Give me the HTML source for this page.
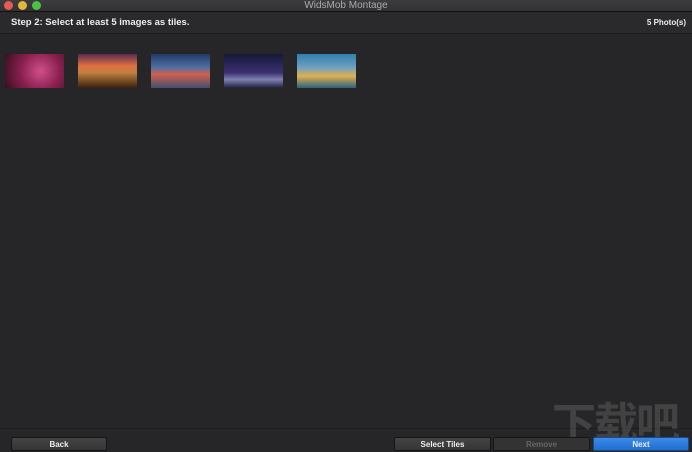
<!DOCTYPE html>
<html><head><meta charset="utf-8"><style>
*{margin:0;padding:0;box-sizing:border-box}
body{width:692px;height:450px;background:#262527;font-family:"Liberation Sans","Noto Sans CJK SC",sans-serif;position:relative;overflow:hidden}
.tb{position:absolute;left:0;top:0;width:692px;height:12px;background:linear-gradient(#3d3c3e,#323133);border-bottom:1px solid #111;text-align:center;color:#aaa;font-size:10px;line-height:11px}
.dot{position:absolute;top:1px;width:9px;height:9px;border-radius:50%}
.hdr{position:absolute;top:12px;left:0;width:692px;height:22px;background:#2a292b;border-bottom:1px solid #1c1c1d;color:#eee;font-weight:bold}
.t{position:absolute;background:#555}
.btn{position:absolute;top:437px;height:14px;background:linear-gradient(#444,#353535);border:1px solid #151515;border-radius:2px;color:#eee;font-size:8px;font-weight:bold;text-align:center;line-height:13px}
</style></head><body>
<div class="tb">WidsMob Montage
<div class="dot" style="left:4px;background:#e85a55"></div>
<div class="dot" style="left:18px;background:#e5b53c"></div>
<div class="dot" style="left:32px;background:#4fbf4a"></div>
</div>
<div class="hdr"><span style="position:absolute;left:11px;top:5px;font-size:9.5px">Step 2: Select at least 5 images as tiles.</span><span style="position:absolute;right:6px;top:6px;font-size:8px">5 Photo(s)</span></div>
<div class="t" style="left:5px;top:54px;width:59px;height:34px;background:radial-gradient(circle at 60% 50%,#d0508a,#8a2050 50%,#3a1020)"></div>
<div class="t" style="left:78px;top:54px;width:59px;height:34px;background:linear-gradient(#5a2a50,#e07040 35%,#c08040 55%,#3a2010)"></div>
<div class="t" style="left:151px;top:54px;width:59px;height:34px;background:linear-gradient(#203a6a,#5070a0 40%,#d06050 60%,#405070)"></div>
<div class="t" style="left:224px;top:54px;width:59px;height:34px;background:linear-gradient(#15183a,#3a3070 55%,#8080b0 75%,#202040)"></div>
<div class="t" style="left:297px;top:54px;width:59px;height:34px;background:linear-gradient(#3080b0,#70a0c0 40%,#e0b050 65%,#2a6080)"></div>
<div style="position:absolute;left:0;top:428px;width:692px;border-top:1px solid #1c1c1d"></div>
<div style="position:absolute;left:552px;top:388px;font-size:44px;color:rgba(120,120,120,.35);font-weight:bold;letter-spacing:-2px">下载吧</div>
<div class="btn" style="left:11px;width:96px">Back</div>
<div class="btn" style="left:394px;width:97px">Select Tiles</div>
<div class="btn" style="left:493px;width:97px;color:#666;background:#333">Remove</div>
<div class="btn" style="left:593px;width:96px;background:linear-gradient(#3c8ae8,#1f6ed0);border-color:#154c90">Next</div>
</body></html>
